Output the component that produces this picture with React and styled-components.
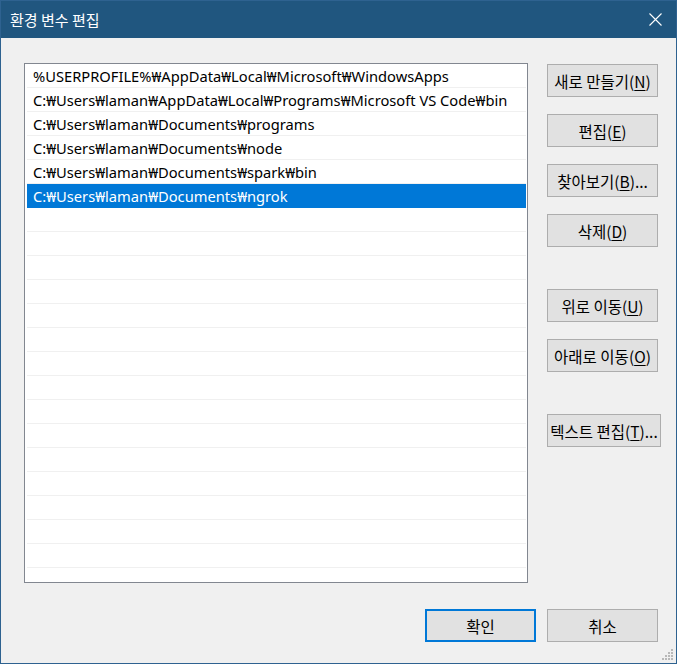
import styled, { createGlobalStyle } from "styled-components";

const GlobalStyle = createGlobalStyle`
    html, body {
        margin: 0;
        padding: 0;
        background: #f0f0f0;
    }
    * {
        box-sizing: border-box;
    }
`;

const StyledWindow = styled.div`
    position: relative;
    width: 677px;
    height: 664px;
    border: 1px solid #2e6290;
    background: #f0f0f0;
    display: flex;
    flex-direction: column;
    font-family: "Noto Sans", "Noto Sans CJK KR", sans-serif;
    font-size: 15px;
    color: #000;
`;

const StyledTitleBar = styled.div`
    height: 37px;
    flex: none;
    background: #20567f;
    color: #fff;
    display: flex;
    align-items: center;
    justify-content: space-between;
    padding: 0 14px 0 9px;
    font-family: "Noto Sans CJK KR", sans-serif;
    font-size: 15px;
`;

const StyledClose = styled.svg`
    width: 13px;
    height: 13px;
    display: block;
`;

const StyledBody = styled.div`
    flex: 1;
    display: flex;
    flex-direction: column;
    padding: 25px 18px 0 23px;
`;

const StyledMain = styled.div`
    display: flex;
    gap: 19px;
`;

const StyledList = styled.div`
    width: 504px;
    height: 520px;
    flex: none;
    background: #fff;
    border: 1px solid #828790;
    padding: 0 1px 0 2px;
    overflow: hidden;
`;

const StyledRow = styled.div`
    height: 24px;
    line-height: 23px;
    padding: 1px 0 0 6px;
    font-size: 14.7px;
    white-space: nowrap;
    border-bottom: 1px solid #f0f0f0;
    background: ${(p) => (p.selected ? "#0078d7" : "transparent")};
    color: ${(p) => (p.selected ? "#fff" : "#000")};
    border-bottom-color: ${(p) => (p.selected ? "#0078d7" : "#f0f0f0")};
`;

const StyledSide = styled.div`
    display: flex;
    flex-direction: column;
    gap: 17px;
    padding-top: 1px;
`;

const StyledButton = styled.button`
    width: ${(p) => p.width || 111}px;
    height: 33px;
    margin-top: ${(p) => (p.spaced ? 25 : 0)}px;
    background: #e1e1e1;
    border: ${(p) => (p.primary ? "2px solid #0078d7" : "1px solid #adadad")};
    border-radius: 0;
    padding: 0;
    font-family: "Noto Sans CJK KR", sans-serif;
    font-size: 15.5px;
    color: #000;
    white-space: nowrap;
    display: flex;
    align-items: center;
    justify-content: center;
`;

const StyledKey = styled.span`
    text-decoration: underline;
    text-underline-offset: 2px;
`;

const StyledFooter = styled.div`
    display: flex;
    justify-content: flex-end;
    gap: 11px;
    margin-top: 26px;
`;

const StyledGrip = styled.svg`
    position: absolute;
    right: 2px;
    bottom: 2px;
    width: 12px;
    height: 12px;
`;

const paths = [
    "%USERPROFILE%₩AppData₩Local₩Microsoft₩WindowsApps",
    "C:₩Users₩laman₩AppData₩Local₩Programs₩Microsoft VS Code₩bin",
    "C:₩Users₩laman₩Documents₩programs",
    "C:₩Users₩laman₩Documents₩node",
    "C:₩Users₩laman₩Documents₩spark₩bin",
    "C:₩Users₩laman₩Documents₩ngrok",
];

const buttons = [
    { label: "새로 만들기", key: "N" },
    { label: "편집", key: "E" },
    { label: "찾아보기", key: "B", tail: "..." },
    { label: "삭제", key: "D" },
    { label: "위로 이동", key: "U", spaced: true },
    { label: "아래로 이동", key: "O" },
    { label: "텍스트 편집", key: "T", tail: "...", spaced: true, width: 114 },
];

const App = () => {
    const rows = [...paths];
    while (rows.length < 22) rows.push("");

    return (
        <>
            <GlobalStyle />
            <StyledWindow>
                <StyledTitleBar>
                    <span>환경 변수 편집</span>
                    <StyledClose viewBox="0 0 13 13">
                        <path d="M0.5 0.5 L12.5 12.5 M12.5 0.5 L0.5 12.5" stroke="#fff" strokeWidth="1.1" />
                    </StyledClose>
                </StyledTitleBar>
                <StyledBody>
                    <StyledMain>
                        <StyledList>
                            {rows.map((text, i) => (
                                <StyledRow key={i} selected={i === 5}>
                                    {text}
                                </StyledRow>
                            ))}
                        </StyledList>
                        <StyledSide>
                            {buttons.map((b) => (
                                <StyledButton key={b.key} spaced={b.spaced} width={b.width}>
                                    {b.label}(<StyledKey>{b.key}</StyledKey>){b.tail}
                                </StyledButton>
                            ))}
                        </StyledSide>
                    </StyledMain>
                    <StyledFooter>
                        <StyledButton primary>확인</StyledButton>
                        <StyledButton>취소</StyledButton>
                    </StyledFooter>
                </StyledBody>
                <StyledGrip viewBox="0 0 12 12">
                    {[[9, 0], [6, 3], [9, 3], [3, 6], [6, 6], [9, 6], [0, 9], [3, 9], [6, 9], [9, 9]].map(([x, y]) => (
                        <rect key={`${x}-${y}`} x={x} y={y} width="2" height="2" fill="#b8b8b8" />
                    ))}
                </StyledGrip>
            </StyledWindow>
        </>
    );
};

export default App;
